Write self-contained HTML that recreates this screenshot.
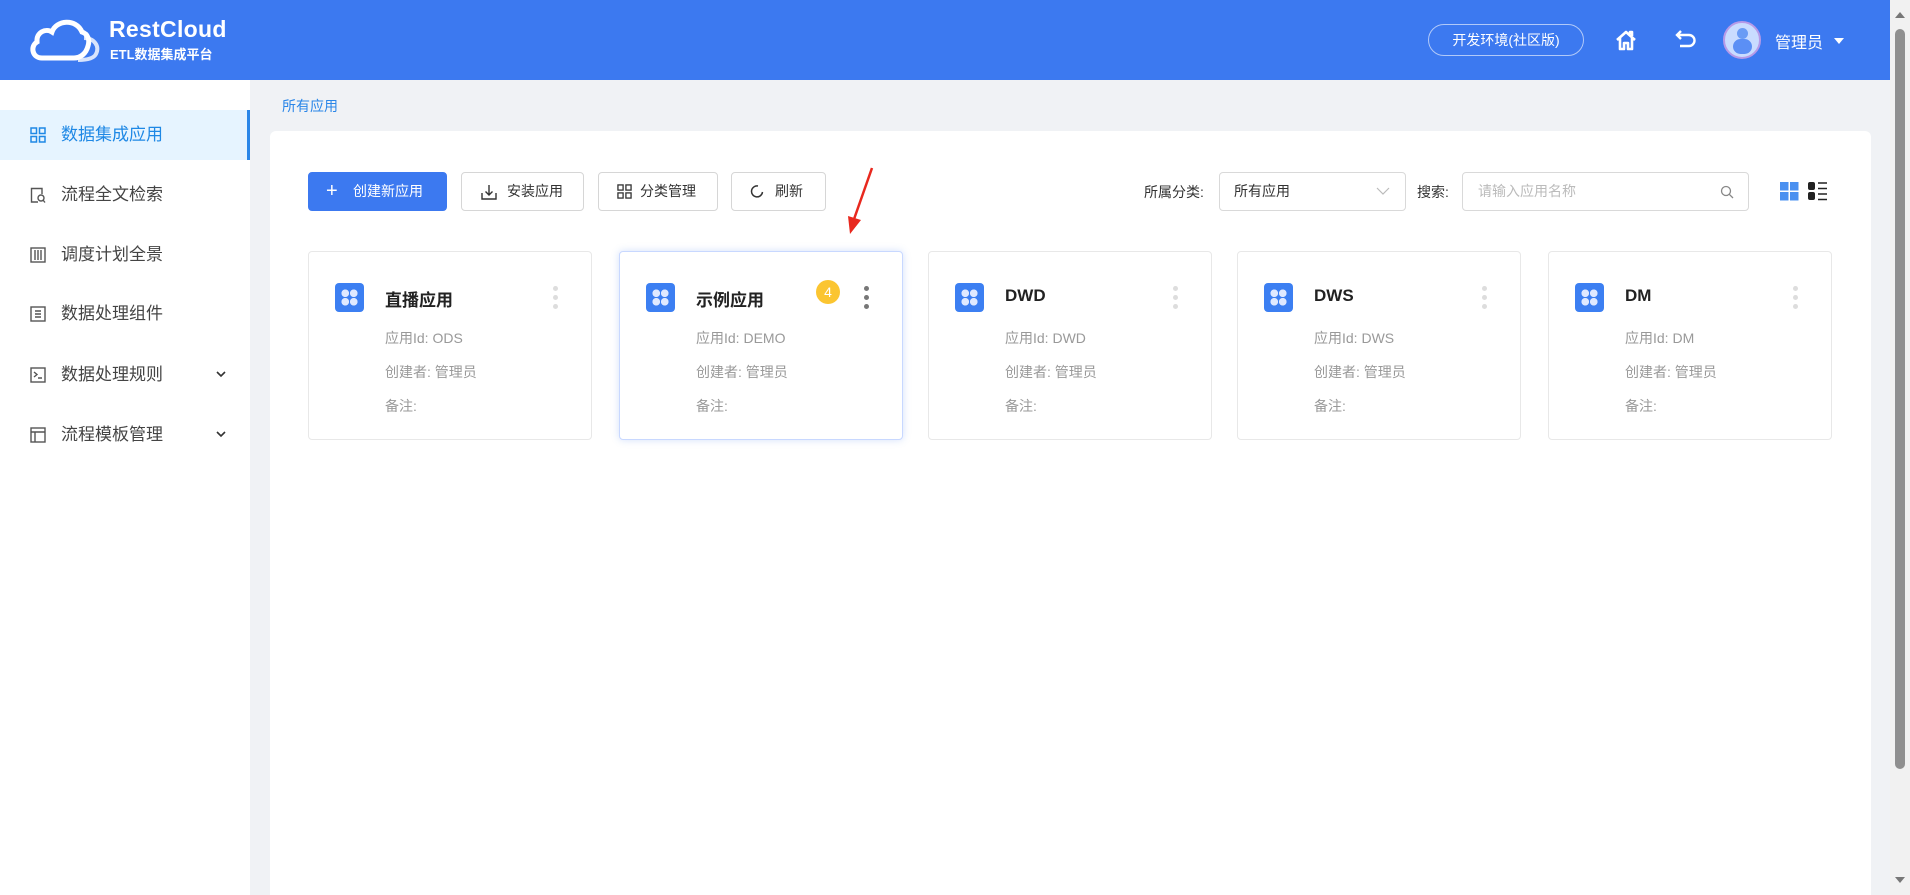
<!DOCTYPE html>
<html style="overflow:hidden;height:895px"><head><meta charset="utf-8"><style>
*{box-sizing:border-box;margin:0;padding:0}
body{width:1910px;height:895px;overflow:hidden;background:#f0f2f5;font-family:"Liberation Sans","Noto Sans CJK SC",sans-serif;position:relative}
.hdr{position:absolute;left:0;top:0;width:1890px;height:80px;background:#3c79f0;color:#fff}
.abs{position:absolute}
.side{position:absolute;left:0;top:80px;width:250px;height:815px;background:#fff}
.item{position:absolute;left:0;width:250px;height:50px;line-height:50px;font-size:17px;color:#444}
.item .t{position:absolute;left:61px}
.item svg{position:absolute;left:30px;top:17px}
.item .ch{position:absolute;left:216px;top:20px}
.card{position:absolute;left:270px;top:131px;width:1601px;height:764px;background:#fff;border-radius:6px 6px 0 0}
.btn{position:absolute;top:172px;height:39px;border:1px solid #d6d6d6;border-radius:4px;background:#fff;font-size:14px;color:#333;line-height:37px}
.app{position:absolute;top:251px;width:284px;height:189px;border:1px solid #e8e8e8;border-radius:4px;background:#fff}
.app .ic{position:absolute;left:26px;top:31px;width:29px;height:29px;border-radius:4px;background:#3c7ff2}
.app .ttl{position:absolute;left:76px;top:34px;font-size:17px;font-weight:bold;color:#222}
.app .l{position:absolute;left:76px;font-size:14px;color:#999}
.app .dots{position:absolute;left:244px;top:34px}
.app .dots i{display:block;width:5px;height:5px;border-radius:50%;background:#ddd;margin-bottom:4px}
.app .ic::before{content:"";position:absolute;left:6px;top:6px;width:17px;height:17px;background:radial-gradient(circle at 25% 25%,#dfe9ff 3.6px,transparent 4px),radial-gradient(circle at 75% 25%,#dfe9ff 3.6px,transparent 4px),radial-gradient(circle at 25% 75%,#dfe9ff 3.6px,transparent 4px),radial-gradient(circle at 75% 75%,#dfe9ff 3.6px,transparent 4px)}
</style></head><body>
<div class="hdr">
 <svg class="abs" style="left:28px;top:16px" width="74" height="47" viewBox="0 0 74 47"><path d="M14 42 C4 42 2 30 9 26 C8 16 18 12 24 16 C28 4 48 2 54 16 C60 18 62 24 60 30 C58 38 52 42 46 42 Z" fill="none" stroke="#fff" stroke-width="5"/><path d="M56 22 C66 22 72 30 68 38 C66 42 60 44 50 44" fill="none" stroke="#fff" stroke-width="4" opacity=".8"/></svg>
 <div class="abs" style="left:109px;top:16px;font-size:23px;font-weight:bold;letter-spacing:.3px">RestCloud</div>
 <div class="abs" style="left:110px;top:44px;font-size:13px;font-weight:bold">ETL数据集成平台</div>
 <div class="abs" style="left:1428px;top:24px;width:156px;height:32px;border:1px solid rgba(255,255,255,.6);border-radius:16px;text-align:center;line-height:30px;font-size:14px">开发环境(社区版)</div>
 <svg class="abs" style="left:1614px;top:28px" width="24" height="24" viewBox="0 0 24 24"><path d="M3 12 L12 4 L21 12 M6 10 V21 H10 V15 H14 V21 H18 V10 M16 6 V4 H18 V8" fill="none" stroke="#fff" stroke-width="2.6" stroke-linejoin="round"/></svg>
 <svg class="abs" style="left:1674px;top:28px" width="24" height="24" viewBox="0 0 24 24"><path d="M7 3 L3 7 L7 11 M3 7 H15 A5.5 5.5 0 0 1 15 18 H6" fill="none" stroke="#fff" stroke-width="2.4"/></svg>
 <div class="abs" style="left:1723px;top:21px;width:38px;height:38px;border-radius:50%;background:#c9dcff;border:2px solid #b69ae8"><div class="abs" style="left:12px;top:5px;width:11px;height:11px;border-radius:50%;background:#6a9cf5"></div><div class="abs" style="left:8px;top:16px;width:19px;height:15px;border-radius:8px;background:#5b8ff5"></div></div>
 <div class="abs" style="left:1775px;top:29px;font-size:16px">管理员</div>
 <div class="abs" style="left:1834px;top:38px;border:5px solid transparent;border-top:6px solid #fff"></div>
</div>
<div class="side">
 <div class="item" style="top:30px;background:#e6f4ff;color:#1e88e5;border-right:3px solid #2a86e8"><svg width="16" height="16" viewBox="0 0 16 16" fill="none" stroke="#1e88e5" stroke-width="1.5"><rect x="1" y="1" width="5.5" height="5.5"/><rect x="9.5" y="1" width="5.5" height="5.5"/><rect x="1" y="9.5" width="5.5" height="5.5"/><rect x="9.5" y="9.5" width="5.5" height="5.5"/></svg><span class="t">数据集成应用</span></div>
 <div class="item" style="top:90px"><svg width="16" height="17" viewBox="0 0 16 17" fill="none" stroke="#555" stroke-width="1.4"><path d="M8 15 H1.5 V1.5 H12 V7"/><circle cx="11" cy="11" r="3"/><path d="M13 13 L15 15.5"/></svg><span class="t">流程全文检索</span></div>
 <div class="item" style="top:150px"><svg width="16" height="16" viewBox="0 0 16 16" fill="none" stroke="#555" stroke-width="1.4"><rect x="1" y="1" width="14" height="14"/><path d="M5 3v10M8 3v10M11 3v10"/></svg><span class="t">调度计划全景</span></div>
 <div class="item" style="top:209px"><svg width="16" height="16" viewBox="0 0 16 16" fill="none" stroke="#555" stroke-width="1.4"><rect x="1" y="1" width="14" height="14"/><path d="M5 5h6M5 8h6M5 11h6"/></svg><span class="t">数据处理组件</span></div>
 <div class="item" style="top:270px"><svg width="16" height="16" viewBox="0 0 16 16" fill="none" stroke="#555" stroke-width="1.4"><rect x="1" y="1" width="14" height="14"/><path d="M4 5l3 2.5-3 2.5M8 11h4"/></svg><span class="t">数据处理规则</span><svg class="ch" width="10" height="8" viewBox="0 0 10 8"><path d="M1 2l4 4 4-4" fill="none" stroke="#333" stroke-width="1.6"/></svg></div>
 <div class="item" style="top:330px"><svg width="16" height="16" viewBox="0 0 16 16" fill="none" stroke="#555" stroke-width="1.4"><rect x="1" y="1" width="14" height="14"/><path d="M1 5h14M5 5v10"/></svg><span class="t">流程模板管理</span><svg class="ch" width="10" height="8" viewBox="0 0 10 8"><path d="M1 2l4 4 4-4" fill="none" stroke="#333" stroke-width="1.6"/></svg></div>
</div>
<div class="abs" style="left:282px;top:96px;font-size:14px;color:#2a86e8">所有应用</div>
<div class="card"></div>
<div class="btn" style="left:308px;width:139px;background:#3c79f0;border-color:#3c79f0;color:#fff"><span class="abs" style="left:17px;top:0;font-size:20px;font-weight:300">+</span><span class="abs" style="left:44px">创建新应用</span></div>
<div class="btn" style="left:461px;width:123px"><svg class="abs" style="left:19px;top:11px" width="16" height="16" viewBox="0 0 16 16" fill="none" stroke="#333" stroke-width="1.4"><path d="M1 9v6h14V9M8 1v10M4.5 7.5L8 11l3.5-3.5"/></svg><span class="abs" style="left:45px">安装应用</span></div>
<div class="btn" style="left:598px;width:120px"><svg class="abs" style="left:18px;top:11px" width="15" height="15" viewBox="0 0 16 16" fill="none" stroke="#333" stroke-width="1.4"><rect x="1" y="1" width="5.5" height="5.5"/><rect x="9.5" y="1" width="5.5" height="5.5"/><rect x="1" y="9.5" width="5.5" height="5.5"/><rect x="9.5" y="9.5" width="5.5" height="5.5"/></svg><span class="abs" style="left:41px">分类管理</span></div>
<div class="btn" style="left:731px;width:95px"><svg class="abs" style="left:18px;top:11px" width="14" height="14" viewBox="0 0 14 14" fill="none" stroke="#333" stroke-width="1.5"><path d="M8 2A5.5 5.5 0 1 0 12.5 8"/></svg><span class="abs" style="left:43px">刷新</span></div>
<svg class="abs" style="left:840px;top:160px" width="40" height="80" viewBox="0 0 40 80"><path d="M32 8 L13 62" stroke="#e8281e" stroke-width="2.5"/><path d="M8 56 L10 74 L21 60 Z" fill="#e8281e"/></svg>
<div class="abs" style="left:1144px;top:182px;font-size:14px;color:#333">所属分类:</div>
<div class="abs" style="left:1219px;top:172px;width:187px;height:39px;border:1px solid #d9d9d9;border-radius:4px;font-size:14px;color:#333;line-height:37px;padding-left:14px">所有应用<svg class="abs" style="left:156px;top:14px" width="14" height="9" viewBox="0 0 14 9"><path d="M1 1l6 6 6-6" fill="none" stroke="#bbb" stroke-width="1.2"/></svg></div>
<div class="abs" style="left:1417px;top:182px;font-size:14px;color:#333">搜索:</div>
<div class="abs" style="left:1462px;top:172px;width:287px;height:39px;border:1px solid #d9d9d9;border-radius:4px;font-size:14px;color:#bbb;line-height:37px;padding-left:15px">请输入应用名称<svg class="abs" style="left:257px;top:12px" width="14" height="14" viewBox="0 0 14 14" fill="none" stroke="#888" stroke-width="1.3"><circle cx="6" cy="6" r="4.5"/><path d="M9.3 9.3L13 13"/></svg></div>
<svg class="abs" style="left:1780px;top:182px" width="19" height="19" viewBox="0 0 19 19" fill="#4a90f0"><rect x="0" y="0" width="8.5" height="8.5"/><rect x="10" y="0" width="8.5" height="8.5"/><rect x="0" y="10" width="8.5" height="8.5"/><rect x="10" y="10" width="8.5" height="8.5"/></svg>
<svg class="abs" style="left:1808px;top:182px" width="20" height="19" viewBox="0 0 20 19"><rect x="0" y="0" width="7" height="8" rx="2" fill="#222"/><rect x="0" y="10" width="7" height="8" rx="2" fill="#222"/><path d="M10 1h9M10 6.5h9M10 12h9M10 17.5h9" stroke="#222" stroke-width="1.6"/></svg>

<div class="app" style="left:308px"><div class="ic"></div><div class="ttl">直播应用</div><div class="l" style="top:76px">应用Id: ODS</div><div class="l" style="top:110px">创建者: 管理员</div><div class="l" style="top:144px">备注:</div><div class="dots"><i></i><i></i><i></i></div></div>
<div class="app" style="left:619px;border-color:#c8d8ff;box-shadow:0 0 8px rgba(80,130,240,.25)"><div class="ic"></div><div class="ttl">示例应用</div><div class="abs" style="left:196px;top:28px;width:24px;height:24px;border-radius:50%;background:#fbc531;color:#fff;font-size:14px;text-align:center;line-height:24px">4</div><div class="l" style="top:76px">应用Id: DEMO</div><div class="l" style="top:110px">创建者: 管理员</div><div class="l" style="top:144px">备注:</div><div class="dots"><i style="background:#777"></i><i style="background:#777"></i><i style="background:#777"></i></div></div>
<div class="app" style="left:928px"><div class="ic"></div><div class="ttl">DWD</div><div class="l" style="top:76px">应用Id: DWD</div><div class="l" style="top:110px">创建者: 管理员</div><div class="l" style="top:144px">备注:</div><div class="dots"><i></i><i></i><i></i></div></div>
<div class="app" style="left:1237px"><div class="ic"></div><div class="ttl">DWS</div><div class="l" style="top:76px">应用Id: DWS</div><div class="l" style="top:110px">创建者: 管理员</div><div class="l" style="top:144px">备注:</div><div class="dots"><i></i><i></i><i></i></div></div>
<div class="app" style="left:1548px"><div class="ic"></div><div class="ttl">DM</div><div class="l" style="top:76px">应用Id: DM</div><div class="l" style="top:110px">创建者: 管理员</div><div class="l" style="top:144px">备注:</div><div class="dots"><i></i><i></i><i></i></div></div>

<div class="abs" style="left:1890px;top:0;width:20px;height:895px;background:#f1f1f1"></div>
<div class="abs" style="left:1895px;top:29px;width:10px;height:740px;background:#8f8f8f;border-radius:5px"></div>
<div class="abs" style="left:1895px;top:12px;border:5px solid transparent;border-bottom:6px solid #777;border-top:0"></div>
<div class="abs" style="left:1895px;top:877px;border:5px solid transparent;border-top:6px solid #777;border-bottom:0"></div>
</body></html>
